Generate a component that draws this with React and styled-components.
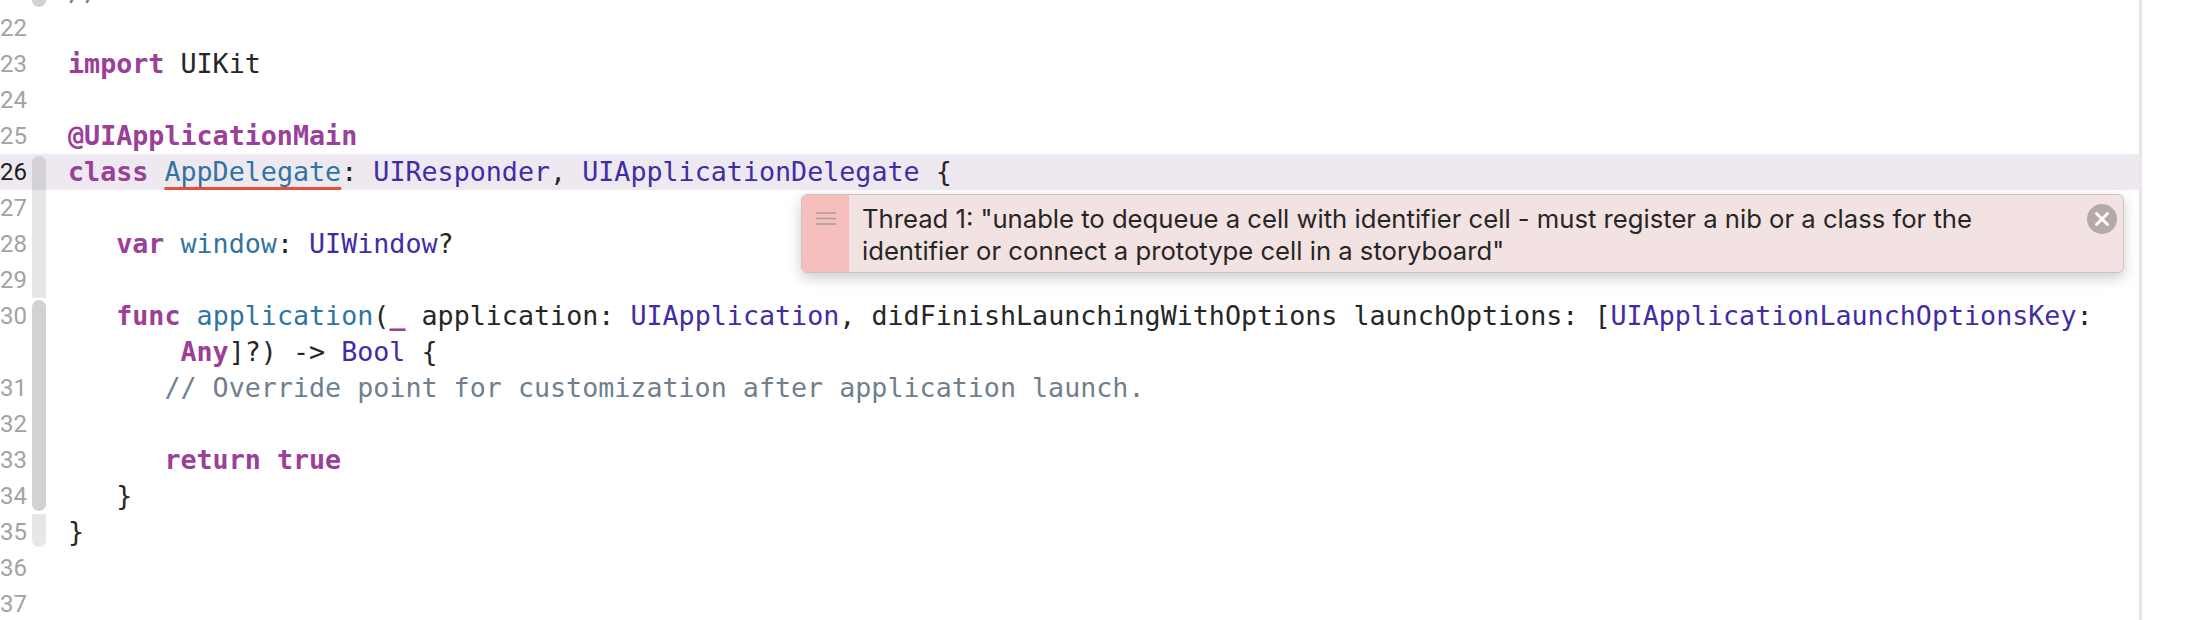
import React from "react";
import styled, { createGlobalStyle } from "styled-components";

const Global = createGlobalStyle`
  html, body { margin: 0; padding: 0; height: 620px; overflow: hidden; background: #fff; }
`;

const Page = styled.div`
  width: 2202px;
  height: 620px;
  overflow: hidden;
  background: #fff;
`;

const Editor = styled.div`
  position: relative;
  width: 2139px;
  height: 620px;
  border-right: 3px solid #e6e6e6;
  overflow: hidden;
`;

const Lines = styled.div`
  display: flex;
  flex-direction: column;
  margin-top: -26px;
`;

const Row = styled.div`
  display: flex;
  align-items: stretch;
  height: 36px;
  background: ${(p) => (p.$current ? "#eee9f1" : "transparent")};
`;

const LineNumber = styled.div`
  width: 32px;
  flex: none;
  font-family: Roboto, sans-serif;
  font-size: 24px;
  line-height: 36px;
  color: ${(p) => (p.$current ? "#1c1c1c" : "#a3a3a3")};
  white-space: nowrap;
`;

const foldColors = { light: "#e7e7e7", dark: "#d2d2d2", band: "#d5d1d9" };

const Fold = styled.div`
  width: 14px;
  flex: none;
  margin-right: 22px;
  background: ${(p) => foldColors[p.$tone] || "transparent"};
  margin-top: ${(p) => (p.$start ? "2px" : "0")};
  margin-bottom: ${(p) => (p.$end ? "3px" : "0")};
  border-radius: ${(p) => (p.$start ? "7px 7px 0 0" : p.$end ? "0 0 7px 7px" : "0")};
`;

const Code = styled.div`
  font-family: "DejaVu Sans Mono", "Liberation Mono", monospace;
  font-size: 26.7px;
  line-height: 36px;
  white-space: pre;
  padding-left: ${(p) => p.$indent * 16.07}px;
  color: #262626;
`;

const tokenStyles = {
  kw: "color:#9b3f98;font-weight:700;",
  type: "color:#3f2da6;",
  proj: "color:#2f74a3;",
  com: "color:#6f7f8e;",
  plain: "color:#262626;",
  err: "color:#2f74a3;text-decoration:underline solid #e8503a 3px;text-underline-offset:6px;text-decoration-skip-ink:none;",
};

const Token = styled.span`
  ${(p) => tokenStyles[p.$kind]}
`;

const ErrorPopup = styled.div`
  position: absolute;
  left: 801px;
  top: 194px;
  width: 1323px;
  height: 79px;
  box-sizing: border-box;
  display: flex;
  background: #f2e2e2;
  border: 1px solid #d3c2c2;
  border-radius: 6px;
  box-shadow: 0 5px 14px rgba(0, 0, 0, 0.2);
  overflow: hidden;
`;

const Marker = styled.div`
  width: 47px;
  flex: none;
  background: #f6bfbd;
  display: flex;
  justify-content: center;
  padding-top: 17px;
  box-sizing: border-box;
`;

const MessageText = styled.div`
  flex: 1;
  padding: 8px 0 0 13px;
  font-family: Inter, "Liberation Sans", sans-serif;
  font-size: 25.65px;
  line-height: 32px;
  color: #262626;
  white-space: pre;
`;

const Close = styled.div`
  width: 30px;
  height: 30px;
  flex: none;
  margin: 9px 6px 0 0;
  display: flex;
`;

const lines = [
  { n: 21, tone: "dark", end: true, tokens: [["com", "//"]] },
  { n: 22, tokens: [] },
  { n: 23, tokens: [["kw", "import"], ["plain", " UIKit"]] },
  { n: 24, tokens: [] },
  { n: 25, tokens: [["kw", "@UIApplicationMain"]] },
  {
    n: 26,
    current: true,
    tone: "band",
    start: true,
    tokens: [
      ["kw", "class"],
      ["plain", " "],
      ["err", "AppDelegate"],
      ["plain", ": "],
      ["type", "UIResponder"],
      ["plain", ", "],
      ["type", "UIApplicationDelegate"],
      ["plain", " {"],
    ],
  },
  { n: 27, tone: "light", tokens: [] },
  {
    n: 28,
    tone: "light",
    indent: 3,
    tokens: [["kw", "var"], ["plain", " "], ["proj", "window"], ["plain", ": "], ["type", "UIWindow"], ["plain", "?"]],
  },
  { n: 29, tone: "light", tokens: [] },
  {
    n: 30,
    tone: "dark",
    start: true,
    indent: 3,
    tokens: [
      ["kw", "func"],
      ["plain", " "],
      ["proj", "application"],
      ["plain", "("],
      ["kw", "_"],
      ["plain", " application: "],
      ["type", "UIApplication"],
      ["plain", ", didFinishLaunchingWithOptions launchOptions: ["],
      ["type", "UIApplicationLaunchOptionsKey"],
      ["plain", ":"],
    ],
  },
  {
    tone: "dark",
    indent: 7,
    tokens: [["kw", "Any"], ["plain", "]?) -> "], ["type", "Bool"], ["plain", " {"]],
  },
  {
    n: 31,
    tone: "dark",
    indent: 6,
    tokens: [["com", "// Override point for customization after application launch."]],
  },
  { n: 32, tone: "dark", tokens: [] },
  { n: 33, tone: "dark", indent: 6, tokens: [["kw", "return"], ["plain", " "], ["kw", "true"]] },
  { n: 34, tone: "dark", end: true, indent: 3, tokens: [["plain", "}"]] },
  { n: 35, tone: "light", end: true, tokens: [["plain", "}"]] },
  { n: 36, tokens: [] },
  { n: 37, tokens: [] },
];

export default function App() {
  return (
    <Page>
      <Global />
      <Editor>
        <Lines>
          {lines.map((l, i) => (
            <Row key={i} $current={l.current}>
              <LineNumber $current={l.current}>{l.n}</LineNumber>
              <Fold $tone={l.tone} $start={l.start} $end={l.end} />
              <Code $indent={l.indent || 0}>
                {l.tokens.map(([kind, text], j) => (
                  <Token key={j} $kind={kind}>
                    {text}
                  </Token>
                ))}
              </Code>
            </Row>
          ))}
        </Lines>
        <ErrorPopup>
          <Marker>
            <svg width="20" height="13" viewBox="0 0 20 13">
              <path d="M0 1h20M0 6.5h20M0 12h20" stroke="#a89c9c" strokeWidth="1.5" />
            </svg>
          </Marker>
          <MessageText>
            {'Thread 1: "unable to dequeue a cell with identifier cell - must register a nib or a class for the\nidentifier or connect a prototype cell in a storyboard"'}
          </MessageText>
          <Close>
            <svg width="30" height="30" viewBox="0 0 30 30">
              <circle cx="15" cy="15" r="15" fill="#b5a9a9" />
              <path d="M9.5 9.5l11 11M20.5 9.5l-11 11" stroke="#fff" strokeWidth="3" strokeLinecap="round" />
            </svg>
          </Close>
        </ErrorPopup>
      </Editor>
    </Page>
  );
}
